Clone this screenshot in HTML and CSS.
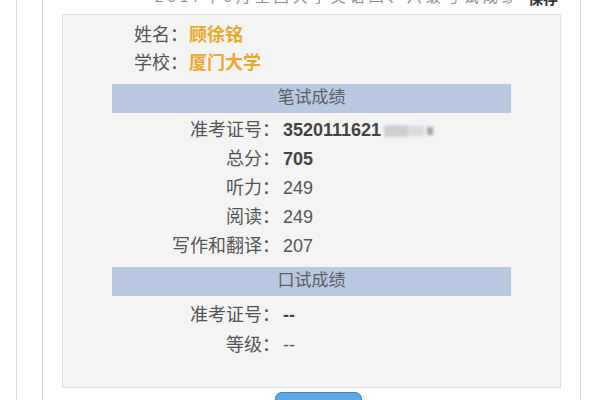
FILE: index.html
```html
<!DOCTYPE html>
<html lang="zh-CN">
<head>
<meta charset="utf-8">
<link rel="stylesheet" href="styles.css">
</head>
<body>
<div class="frame">
  <div class="content">
    <div class="topbar">
      <span class="title">2017年6月全国大学英语四、六级考试成绩查询</span>
      <span class="save">保存</span>
    </div>
    <div class="panel">
      <div class="info">
        <div class="info-row"><span class="info-label">姓名：</span><span class="info-value">顾徐铭</span></div>
        <div class="info-row"><span class="info-label">学校：</span><span class="info-value">厦门大学</span></div>
      </div>
      <div class="band">笔试成绩</div>
      <div class="grid">
        <span class="lbl">准考证号：</span><span class="val strong">3520111621<span class="blur"><span class="b1"></span><span class="b2"></span><span class="b3"></span></span></span>
        <span class="lbl">总分：</span><span class="val strong">705</span>
        <span class="lbl">听力：</span><span class="val">249</span>
        <span class="lbl">阅读：</span><span class="val">249</span>
        <span class="lbl">写作和翻译：</span><span class="val">207</span>
      </div>
      <div class="band band2">口试成绩</div>
      <div class="grid grid2">
        <span class="lbl">准考证号：</span><span class="val strong">--</span>
        <span class="lbl">等级：</span><span class="val">--</span>
      </div>
    </div>
    <div class="actions">
      <button class="btn" type="button" aria-label="返回"></button>
    </div>
  </div>
</div>
</body>
</html>
```

FILE: styles.css
```css
html, body {
  margin: 0;
  padding: 0;
  background: #ffffff;
  height: 100%;
  overflow: hidden;
}
body {
  font-family: "Liberation Sans", "Noto Sans CJK SC", sans-serif;
  color: #555555;
}
.frame {
  margin-left: 16px;
  border-left: 1px solid #dcdcdc;
  height: 400px;
}
.content {
  margin-left: 25px;
  width: 537px;
  height: 400px;
  border-left: 1px solid #d6d6d6;
  border-right: 1px solid #d6d6d6;
  overflow: hidden;
}
.topbar {
  height: 14px;
  display: flex;
  align-items: flex-start;
  justify-content: space-between;
  padding-left: 112px;
  padding-right: 22px;
  overflow: hidden;
  font-size: 15px;
  line-height: 14px;
}
.title {
  color: #8e8e8e;
  margin-top: -10px;
  letter-spacing: 4px;
  white-space: nowrap;
  overflow: hidden;
  flex: 1;
}
.save {
  color: #333333;
  font-weight: bold;
  margin-top: -8px;
  margin-left: 16px;
  white-space: nowrap;
}
.panel {
  margin-left: 19px;
  width: 497px;
  height: 372px;
  background: #f4f4f5;
  border: 1px solid #e0e0e0;
}
.info {
  padding-top: 6px;
  padding-left: 71px;
}
.info-row {
  line-height: 28px;
  font-size: 18px;
  display: flex;
}
.info-label {
  color: #555555;
  width: 55px;
  white-space: nowrap;
}
.info-value {
  color: #eaa82c;
  font-weight: bold;
}
.band {
  margin: 7px 49px 0 49px;
  height: 29px;
  line-height: 27px;
  background: #b9c9e1;
  text-align: center;
  font-size: 17px;
  color: #5a5f66;
}
.band2 {
  margin-top: 6px;
}
.grid {
  display: grid;
  grid-template-columns: 217px 1fr;
  column-gap: 3px;
  padding-top: 3px;
  font-size: 18px;
  line-height: 29px;
}
.grid2 {
  line-height: 30px;
  padding-top: 4px;
}
.lbl {
  text-align: right;
  color: #555555;
}
.val {
  color: #555555;
}
.strong {
  font-weight: bold;
  color: #444444;
}
.blur {
  display: inline-flex;
  align-items: center;
  vertical-align: -1px;
  margin-left: 3px;
  filter: blur(1.5px);
}
.b1 {
  width: 24px;
  height: 12px;
  background: #d0d0d4;
}
.b2 {
  width: 16px;
  height: 10px;
  background: #dadadd;
}
.b3 {
  width: 6px;
  height: 8px;
  background: #a2a2a6;
  margin-left: 3px;
}
.actions {
  padding-top: 4px;
  padding-left: 232px;
}
.btn {
  display: block;
  width: 87px;
  height: 30px;
  background: #5ea6e4;
  border: 1px solid #3d7fbf;
  border-radius: 7px;
  padding: 0;
}
```
